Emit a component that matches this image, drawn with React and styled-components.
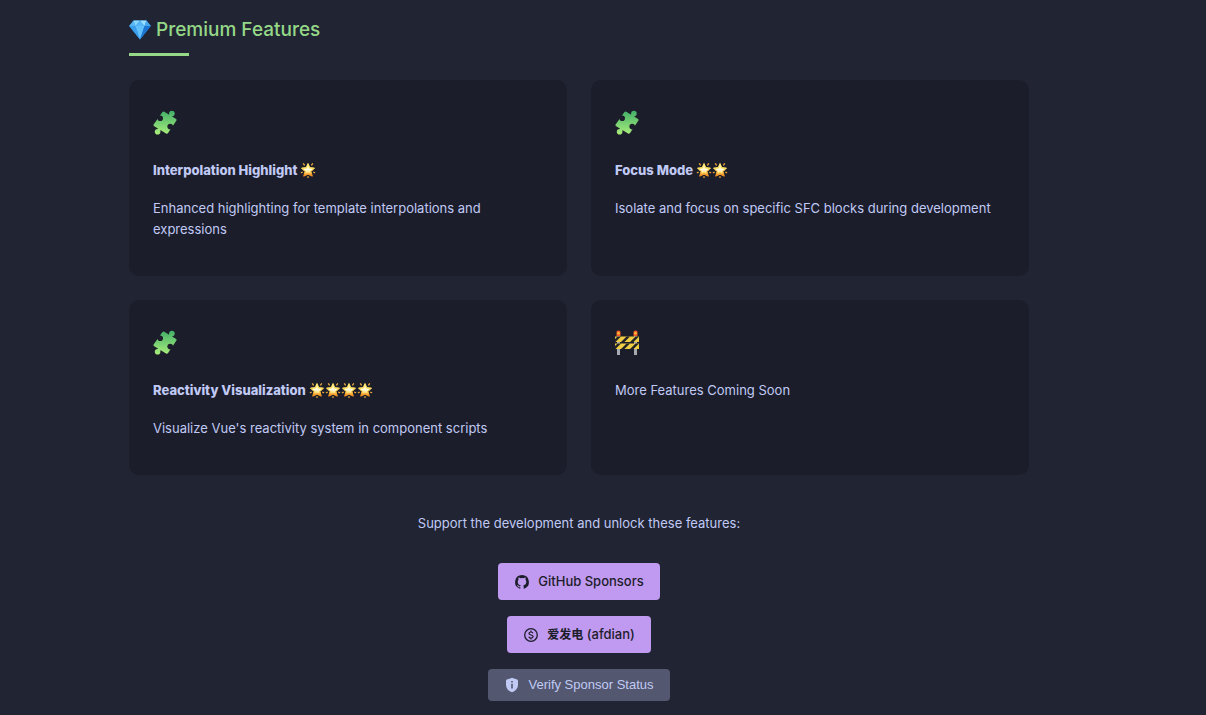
import React from "react";
import styled, { createGlobalStyle } from "styled-components";

const GlobalStyle = createGlobalStyle`
  *, *::before, *::after { box-sizing: border-box; }
  body {
    margin: 0;
    background: #212432;
    color: #c0caf5;
    font-family: Inter, "Noto Sans CJK SC", sans-serif;
    font-size: 13px;
    line-height: 21px;
  }
`;

const Page = styled.main`
  padding: 16px 72px 16px 24px;
`;

const Container = styled.div`
  max-width: 900px;
  margin: 0 auto;
`;

const Heading = styled.h2`
  display: flex;
  align-items: center;
  gap: 5px;
  margin: 0 0 24px;
  padding-bottom: 13px;
  position: relative;
  color: #95d888;
  font-size: 19px;
  font-weight: 500;
  line-height: 27px;

  &::after {
    content: "";
    position: absolute;
    left: 0;
    bottom: 0;
    width: 60px;
    height: 3px;
    background: #95d888;
  }
`;

const Grid = styled.div`
  display: grid;
  grid-template-columns: repeat(2, 1fr);
  gap: 24px;
`;

const Card = styled.article`
  padding: 24px 24px 36px;
  border-radius: 10px;
  background: #1c1d2a;
`;

const CardIcon = styled.div`
  display: flex;
  align-items: center;
  height: 38px;
  margin-bottom: 18px;
`;

const CardTitle = styled.h3`
  display: flex;
  align-items: center;
  gap: 3px;
  margin: 0 0 17px;
  font-size: 13px;
  font-weight: 800;
  line-height: 21px;
`;

const Stars = styled.span`
  display: flex;
`;

const CardText = styled.p`
  margin: 0;
`;

const Support = styled.section`
  display: flex;
  flex-direction: column;
  align-items: center;
  gap: 16px;
  padding-top: 38px;
`;

const SupportText = styled.p`
  margin: 0 0 13px;
`;

const SponsorLink = styled.a`
  display: flex;
  align-items: center;
  gap: 8px;
  padding: 8px 16px;
  border-radius: 4px;
  background: #c099f0;
  color: #1c1d2a;
  font-weight: 500;
  text-decoration: none;
`;

const LinkLabel = styled.span`
  white-space: pre;
`;

const Chinese = styled.span`
  font-family: "Noto Sans CJK SC", sans-serif;
  font-size: 12px;
  font-weight: 700;
  line-height: 1;
`;

const VerifyButton = styled.button`
  display: flex;
  align-items: center;
  gap: 8px;
  padding: 8px 16px;
  border: 0;
  border-radius: 4px;
  background: #53576f;
  color: #c0caf5;
  font: 13px/16px "Liberation Sans", Arial, sans-serif;
`;

const IconBox = styled.span`
  display: flex;
  align-items: center;
  justify-content: center;
  width: 16px;
  height: 16px;
`;

const Gem = () => (
  <svg width="22" height="22" viewBox="0 0 22 22" aria-hidden="true">
    <path d="M4.5 1.5H17.5L21.8 7L11 20.5L.2 7Z" fill="#2b91e8" />
    <path d="M4.5 1.5L6.5 7H.2Z" fill="#58b5f3" />
    <path d="M4.5 1.5H11L6.5 7Z" fill="#8bd8fd" />
    <path d="M11 1.5L15.5 7H6.5Z" fill="#54b4f5" />
    <path d="M11 1.5H17.5L15.5 7Z" fill="#9be0ff" />
    <path d="M17.5 1.5L21.8 7H15.5Z" fill="#48a6ef" />
    <path d="M.2 7H6.5L11 20.5Z" fill="#3a9eec" />
    <path d="M6.5 7H15.5L11 20.5Z" fill="#62c1fa" />
    <path d="M15.5 7H21.8L11 20.5Z" fill="#1c75d2" />
  </svg>
);

const Puzzle = () => (
  <svg width="24" height="26" viewBox="0 0 24 26" aria-hidden="true">
    <defs>
      <linearGradient id="puzzle" x1="0" y1="0" x2="0" y2="26" gradientUnits="userSpaceOnUse">
        <stop offset="0" stopColor="#3fae68" />
        <stop offset="1" stopColor="#b0f17c" />
      </linearGradient>
      <mask id="notches" maskUnits="userSpaceOnUse" x="0" y="0" width="24" height="26">
        <rect width="24" height="26" fill="#fff" />
        <path d="M7.2 8.2L2 4M17.2 16.6L22 21" stroke="#000" strokeWidth="2.6" />
        <circle cx="7.2" cy="8.2" r="2.8" />
        <circle cx="17.2" cy="16.6" r="2.8" />
      </mask>
    </defs>
    <g mask="url(#notches)">
      <path
        d="M10.5 3L22 10L13.8 22.2L2 15Z"
        fill="url(#puzzle)"
        stroke="url(#puzzle)"
        strokeWidth="3"
        strokeLinejoin="round"
      />
      <path d="M15 9L18.8 4M8 17L4.6 21.6" stroke="url(#puzzle)" strokeWidth="3.2" />
      <circle cx="18.9" cy="3.6" r="2.8" fill="url(#puzzle)" />
      <circle cx="4.6" cy="21.8" r="2.8" fill="url(#puzzle)" />
    </g>
  </svg>
);

const Barrier = () => (
  <svg width="24" height="26" viewBox="0 0 24 26" aria-hidden="true">
    <path d="M2 6H5V25H2ZM19 6H22V25H19Z" fill="#a6a9af" />
    <path d="M0 6.5H24V12H0ZM0 13.5H24V19H0Z" fill="#f0ce43" />
    <path
      d="M0 9L2.5 6.5H6L.5 12H0ZM6 12L11.5 6.5H15L9.5 12ZM15 12L20.5 6.5H24L18.5 12ZM0 16L2.5 13.5H6L.5 19H0ZM6 19L11.5 13.5H15L9.5 19ZM15 19L20.5 13.5H24L18.5 19Z"
      fill="#242328"
    />
    <path d="M1.5 6V1.5Q3.5-.5 5.5 1.5V6ZM18.5 6V1.5Q20.5-.5 22.5 1.5V6Z" fill="#f15b24" />
    <circle cx="3.5" cy="3.2" r="1.3" fill="#ffbd3d" />
    <circle cx="20.5" cy="3.2" r="1.3" fill="#ffbd3d" />
  </svg>
);

const Star = () => (
  <svg width="16" height="18" viewBox="0 0 16 18" aria-hidden="true">
    <defs>
      <linearGradient id="star" x1="0" y1="0" x2="0" y2="1">
        <stop offset="0" stopColor="#ffe870" />
        <stop offset=".5" stopColor="#ffdc58" />
        <stop offset="1" stopColor="#ef8a1b" />
      </linearGradient>
      <linearGradient id="glow" x1="0" y1="0" x2="0" y2="1">
        <stop offset="0" stopColor="#fff19a" />
        <stop offset=".5" stopColor="#fffce0" />
        <stop offset="1" stopColor="#ffd15a" />
      </linearGradient>
    </defs>
    <path d="M8 1.5L9.8 5.6L14.5 6.1L11 9.6L12.3 14.2L8 12.2L3.7 14.2L5 9.6L1.5 6.1L6.2 5.6Z" fill="url(#star)" stroke="url(#star)" strokeLinejoin="round" />
    <path d="M8 3L9.3 6.5L12.6 7L10.2 9.2L10.7 11.8L8 10.8L5.3 11.8L5.8 9.2L3.4 7L6.7 6.5Z" fill="url(#glow)" />
    <path d="M3.5 1.8L4.3 2.9M12.5 1.8L11.7 2.9M1.4 10.6L2.2 10.3M14.6 10.6L13.8 10.3M8 14.8V15.4" stroke="#e3a43b" strokeWidth="1.4" strokeLinecap="round" />
  </svg>
);

const GitHub = () => (
  <svg width="14" height="14" viewBox="0 0 14 14" aria-hidden="true">
    <path
      fill="currentColor"
      d="M7 .1A7 7 0 0 0 4.8 13.7C5.2 13.8 5.3 13.6 5.3 13.4V12.2C3.4 12.6 3 11.4 3 11.4C2.7 10.6 2.2 10.4 2.2 10.4C1.6 10 2.3 10 2.3 10C3 10 3.4 10.7 3.4 10.7C4 11.7 4.9 11.4 5.3 11.3C5.4 10.8 5.6 10.5 5.8 10.3C3.8 10.1 2.7 9 2.7 6.8C2.7 6 3 5.2 3.5 4.7C3.3 4.2 3.2 3.4 3.6 2.6C4.3 2.5 5 2.9 5.5 3.2Q7 2.8 8.5 3.2C9 2.9 9.7 2.5 10.4 2.6C10.8 3.4 10.7 4.2 10.5 4.7C11 5.2 11.3 6 11.3 6.8C11.3 9 10.1 10.1 8.2 10.3C8.6 10.6 8.7 11.1 8.7 11.7V13.4C8.7 13.6 8.8 13.8 9.2 13.7A7 7 0 0 0 7 .1Z"
    />
  </svg>
);

const Dollar = () => (
  <svg width="14" height="14" viewBox="0 0 14 14" fill="none" stroke="currentColor" aria-hidden="true">
    <circle cx="7" cy="7" r="6.3" strokeWidth="1.3" />
    <path d="M9 5.2C8.7 4.4 8 4 7 4C5.8 4 5 4.6 5 5.5C5 6.5 5.9 6.8 7 7C8.2 7.2 9.1 7.6 9.1 8.6C9.1 9.5 8.2 10.1 7 10.1C5.9 10.1 5.1 9.6 4.8 8.7M7 2.4V4M7 10V11.6" strokeWidth="1.2" />
  </svg>
);

const Shield = () => (
  <svg width="14" height="16" viewBox="0 0 14 16" aria-hidden="true">
    <path
      fill="currentColor"
      fillRule="evenodd"
      d="M6.4.9Q7 .6 7.6.9L12.2 2.6Q13 2.9 13 3.7V7.5C13 11.3 10.7 14.1 7 15.3C3.3 14.1 1 11.3 1 7.5V3.7Q1 2.9 1.8 2.6ZM6.2 4V5.6H7.8V4ZM6.2 6.8V11.4H7.8V6.8Z"
    />
  </svg>
);

const features = [
  { title: "Interpolation Highlight", stars: 1, text: "Enhanced highlighting for template interpolations and expressions" },
  { title: "Focus Mode", stars: 2, text: "Isolate and focus on specific SFC blocks during development" },
  { title: "Reactivity Visualization", stars: 4, text: "Visualize Vue's reactivity system in component scripts" },
];

export default function App() {
  return (
    <>
      <GlobalStyle />
      <Page>
        <Container>
          <Heading><Gem />Premium Features</Heading>
          <Grid>
            {features.map(({ title, stars, text }) => (
              <Card key={title}>
                <CardIcon><Puzzle /></CardIcon>
                <CardTitle>
                  {title}
                  <Stars>{Array.from({ length: stars }, (_, i) => <Star key={i} />)}</Stars>
                </CardTitle>
                <CardText>{text}</CardText>
              </Card>
            ))}
            <Card>
              <CardIcon><Barrier /></CardIcon>
              <CardText>More Features Coming Soon</CardText>
            </Card>
          </Grid>
          <Support>
            <SupportText>Support the development and unlock these features:</SupportText>
            <SponsorLink href="#github">
              <IconBox><GitHub /></IconBox>
              <LinkLabel>GitHub Sponsors</LinkLabel>
            </SponsorLink>
            <SponsorLink href="#afdian">
              <IconBox><Dollar /></IconBox>
              <LinkLabel><Chinese lang="zh-CN">爱发电</Chinese> (afdian)</LinkLabel>
            </SponsorLink>
            <VerifyButton type="button">
              <IconBox><Shield /></IconBox>
              Verify Sponsor Status
            </VerifyButton>
          </Support>
        </Container>
      </Page>
    </>
  );
}
